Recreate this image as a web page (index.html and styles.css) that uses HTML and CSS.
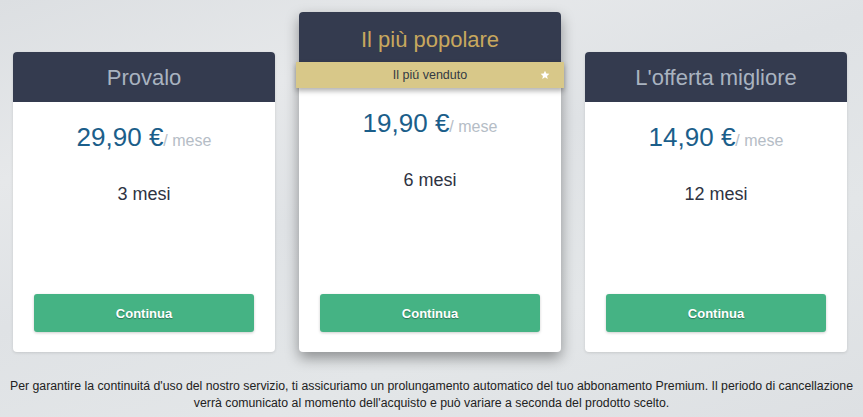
FILE: index.html
```html
<!DOCTYPE html>
<html lang="it">
<head>
<meta charset="utf-8">
<title>Piani</title>
<link rel="stylesheet" href="styles.css">
</head>
<body>
<div class="page">
  <div class="plans">
    <div class="card side">
      <div class="card-head"><h2 class="title">Provalo</h2></div>
      <div class="card-body">
        <div class="price"><span class="amount">29,90 €</span><span class="per">/ mese</span></div>
        <div class="period">3 mesi</div>
        <button class="btn">Continua</button>
      </div>
    </div>
    <div class="card featured">
      <div class="card-head"><h2 class="title gold">Il più popolare</h2></div>
      <div class="ribbon">
        <span>Il piú venduto</span>
        <svg class="star" width="10" height="10" viewBox="0 0 24 24"><path fill="#fff" d="M12 1.5l3.1 6.9 7.4.7-5.6 5 1.7 7.4L12 17.6l-6.6 3.9 1.7-7.4-5.6-5 7.4-.7z"/></svg>
      </div>
      <div class="card-body">
        <div class="price"><span class="amount">19,90 €</span><span class="per">/ mese</span></div>
        <div class="period">6 mesi</div>
        <button class="btn">Continua</button>
      </div>
    </div>
    <div class="card side">
      <div class="card-head"><h2 class="title">L'offerta migliore</h2></div>
      <div class="card-body">
        <div class="price"><span class="amount">14,90 €</span><span class="per">/ mese</span></div>
        <div class="period">12 mesi</div>
        <button class="btn">Continua</button>
      </div>
    </div>
  </div>
  <p class="note">Per garantire la continuitá d'uso del nostro servizio, ti assicuriamo un prolungamento automatico del tuo abbonamento Premium. Il periodo di cancellazione<br>verrà comunicato al momento dell'acquisto e può variare a seconda del prodotto scelto.</p>
</div>
</body>
</html>
```
FILE: styles.css
```css
* { box-sizing: border-box; }
html, body { margin: 0; padding: 0; }
body {
  width: 863px;
  height: 417px;
  overflow: hidden;
  font-family: "Liberation Sans", Arial, sans-serif;
  background: linear-gradient(160deg, #dcdfe2 0%, #e6e8ea 25%, #dfe2e5 45%, #e3e6e8 70%, #dde0e3 100%);
}
.page { padding: 12px 0 0; }
.plans {
  display: flex;
  gap: 24px;
  align-items: stretch;
  height: 340px;
  padding: 0 16px 0 13px;
}
.card {
  width: 262px;
  background: #fff;
  border-radius: 4px;
  display: flex;
  flex-direction: column;
  box-shadow: 0 1px 3px rgba(0,0,0,0.12);
}
.card.side { margin-top: 40px; }
.card.featured {
  box-shadow: 0 6px 14px rgba(0,0,0,0.38);
}
.card-head {
  height: 50px;
  background: #343b4f;
  border-radius: 4px 4px 0 0;
  display: flex;
  align-items: center;
  justify-content: center;
}
.title {
  margin: 0;
  font-weight: normal;
  font-size: 22px;
  color: #a9b3c0;
  padding-top: 2px;
}
.title.gold { color: #c8a85e; padding-top: 5px; }
.ribbon {
  margin: 0 -3px;
  height: 26px;
  background: #d8c889;
  display: flex;
  align-items: center;
  justify-content: center;
  position: relative;
  font-size: 12.5px;
  color: #333a44;
  box-shadow: 0 3px 5px rgba(0,0,0,0.3);
}
.ribbon .star {
  position: absolute;
  right: 14px;
  top: 8px;
}
.card-body {
  flex: 1;
  display: flex;
  flex-direction: column;
  align-items: center;
  padding: 20px 21px 20px;
}
.price { line-height: 30px; }
.amount { font-size: 26px; color: #1b5e8a; }
.per { font-size: 16px; color: #b5bdc6; }
.period {
  margin-top: 27px;
  font-size: 18px;
  line-height: 22px;
  color: #2e3342;
}
.btn {
  margin-top: auto;
  width: 100%;
  height: 38px;
  border: 0;
  border-radius: 3px;
  background: #45b384;
  color: #fff;
  font-family: "Liberation Sans", Arial, sans-serif;
  font-weight: bold;
  font-size: 13px;
  text-shadow: 0 1px 1px rgba(0,0,0,0.35);
  box-shadow: 0 1px 3px rgba(0,0,0,0.2);
  cursor: pointer;
}
.note {
  margin: 26px 0 0;
  padding: 0 2px;
  text-align: center;
  font-size: 12.3px;
  line-height: 17px;
  color: #222;
}
```
